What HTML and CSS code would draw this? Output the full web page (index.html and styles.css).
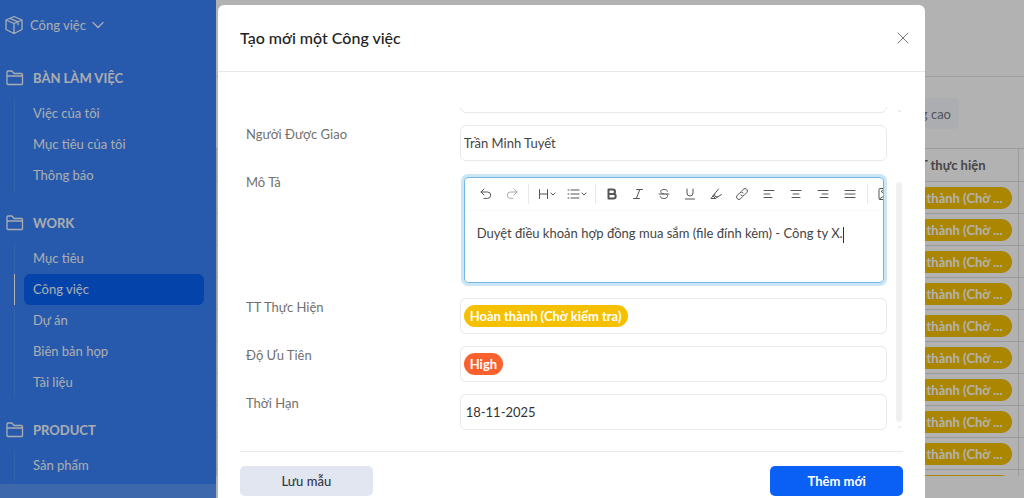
FILE: index.html
```html
<!DOCTYPE html>
<html lang="vi">
<head>
    <meta charset="UTF-8">
    <meta name="viewport" content="width=device-width, initial-scale=1.0">
    <title>Công việc</title>
    <link rel="stylesheet" href="styles.css">
</head>
<body>
    <div class="app">
        <aside class="sidebar">
            <button type="button" class="workspace">
                <svg width="20" height="20" viewBox="0 0 20 20"><path d="M10 1.5 18 5v9.5L10 18.5 2 14.500V5zM2 5l8 3.500L18 5M10 8.500v10M6 3.300l8 3.500v3"/></svg>
                Công việc
                <svg width="12" height="12" viewBox="0 0 12 12"><path d="M1 3.500l5 5 5-5"/></svg>
            </button>
            <nav class="menu">
                <section>
                    <h2><svg width="18" height="16" viewBox="0 0 18 16"><path d="M1 14V2q0-1 1-1h4l2 2.500h7.500q1 0 1 1V14q0 .5-1 .5H2Q1 14.500 1 14zM1 6h15.500"/></svg>BÀN LÀM VIỆC</h2>
                    <ul>
                        <li><a href="#">Việc của tôi</a></li>
                        <li><a href="#">Mục tiêu của tôi</a></li>
                        <li><a href="#">Thông báo</a></li>
                    </ul>
                </section>
                <section>
                    <h2><svg width="18" height="16" viewBox="0 0 18 16"><path d="M1 14V2q0-1 1-1h4l2 2.500h7.500q1 0 1 1V14q0 .5-1 .5H2Q1 14.500 1 14zM1 6h15.500"/></svg>WORK</h2>
                    <ul>
                        <li><a href="#">Mục tiêu</a></li>
                        <li class="active"><a href="#">Công việc</a></li>
                        <li><a href="#">Dự án</a></li>
                        <li><a href="#">Biên bản họp</a></li>
                        <li><a href="#">Tài liệu</a></li>
                    </ul>
                </section>
                <section>
                    <h2><svg width="18" height="16" viewBox="0 0 18 16"><path d="M1 14V2q0-1 1-1h4l2 2.500h7.500q1 0 1 1V14q0 .5-1 .5H2Q1 14.500 1 14zM1 6h15.500"/></svg>PRODUCT</h2>
                    <ul>
                        <li><a href="#">Sản phẩm</a></li>
                    </ul>
                </section>
            </nav>
            <div class="sidebar-footer"></div>
        </aside>

        <main class="main">
            <div class="topbar"></div>
            <div class="filters">
                <button type="button" class="chip">Nâng cao</button>
            </div>
            <div class="table-wrap">
                <table>
                    <thead>
                        <tr><th></th><th class="status">TT thực hiện</th><th class="more"></th></tr>
                    </thead>
                    <tbody>
                        <tr><td></td><td class="status"><span class="tag">Hoàn thành (Chờ ...</span></td><td></td></tr>
                        <tr><td></td><td class="status"><span class="tag">Hoàn thành (Chờ ...</span></td><td></td></tr>
                        <tr><td></td><td class="status"><span class="tag">Hoàn thành (Chờ ...</span></td><td></td></tr>
                        <tr><td></td><td class="status"><span class="tag">Hoàn thành (Chờ ...</span></td><td></td></tr>
                        <tr><td></td><td class="status"><span class="tag">Hoàn thành (Chờ ...</span></td><td></td></tr>
                        <tr><td></td><td class="status"><span class="tag">Hoàn thành (Chờ ...</span></td><td></td></tr>
                        <tr><td></td><td class="status"><span class="tag">Hoàn thành (Chờ ...</span></td><td></td></tr>
                        <tr><td></td><td class="status"><span class="tag">Hoàn thành (Chờ ...</span></td><td></td></tr>
                        <tr><td></td><td class="status"><span class="tag">Hoàn thành (Chờ ...</span></td><td></td></tr>
                        <tr><td></td><td class="status"><span class="tag"></span></td><td></td></tr>
                    </tbody>
                </table>
            </div>
        </main>
    </div>

    <div class="overlay">
        <div class="modal" role="dialog" aria-labelledby="modalTitle">
            <div class="modal-header">
                <h1 id="modalTitle">Tạo mới một Công việc</h1>
                <button type="button" class="close" aria-label="Đóng">
                    <svg width="12" height="12" viewBox="0 0 12 12"><path d="M1 1l10 10M11 1L1 11"/></svg>
                </button>
            </div>

            <div class="modal-body">
                <form class="form" id="taskForm">
                    <div class="row">
                        <span></span>
                        <input type="text" class="field" aria-label="Tên">
                    </div>
                    <div class="row">
                        <label for="assignee">Người Được Giao</label>
                        <input type="text" class="field" id="assignee" value="Trần Minh Tuyết">
                    </div>
                    <div class="row">
                        <label id="descLabel">Mô Tả</label>
                        <div class="editor">
                            <div class="toolbar">
                                <button type="button" aria-label="Undo"><svg width="14" height="14" viewBox="0 0 14 14"><path d="M5 2L2 5l3 3M2 5h6.500a3.200 3.200 0 0 1 0 6.400H5"/></svg></button>
                                <button type="button" aria-label="Redo" class="off"><svg width="14" height="14" viewBox="0 0 14 14"><path d="M9 2l3 3-3 3M12 5H5.500a3.200 3.200 0 0 0 0 6.400H8"/></svg></button>
                                <i class="sep"></i>
                                <button type="button" aria-label="Heading" class="drop"><svg width="20" height="14" viewBox="0 0 20 14"><path d="M2.500 2.500v9M10.500 2.500v9M2.500 7h8M14 6l2 2 2-2"/></svg></button>
                                <button type="button" aria-label="List" class="drop"><svg width="20" height="14" viewBox="0 0 20 14"><path d="M4 3h8M4 7h8M4 11h8M1 3h1M1 7h1M1 11h1M15 6l2 2 2-2"/></svg></button>
                                <i class="sep"></i>
                                <button type="button" aria-label="Bold"><svg class="bold" width="14" height="14" viewBox="0 0 14 14"><path d="M3.500 2.500h4.300a2.200 2.200 0 0 1 0 4.400H3.500zM3.500 6.900h4.900a2.300 2.300 0 0 1 0 4.600H3.500z"/></svg></button>
                                <button type="button" aria-label="Italic"><svg width="14" height="14" viewBox="0 0 14 14"><path d="M5.500 2.500h6M2.500 11.500h6M8.800 2.500l-3.500 9"/></svg></button>
                                <button type="button" aria-label="Strikethrough"><svg width="14" height="14" viewBox="0 0 14 14"><path d="M10.500 4.200C10.500 1.800 3.700 1.600 3.700 4.600c0 1.400 1.300 2 3.300 2.400M2 7h10M3.200 9.500c0 2.800 7.300 2.800 7.300-.2 0-1-.5-1.800-1.300-2.300"/></svg></button>
                                <button type="button" aria-label="Underline"><svg width="14" height="14" viewBox="0 0 14 14"><path d="M4 2v4a3 3 0 0 0 6 0V2M2.500 12h9"/></svg></button>
                                <button type="button" aria-label="Highlight"><svg width="14" height="14" viewBox="0 0 14 14"><path d="M9.500 2L5.500 7l.5 2.500 2.500.5L12.500 7.500M5.500 7L2 11.500h4.500l2-1.500M4 9l2.500 2.500"/></svg></button>
                                <button type="button" aria-label="Link" class="wide"><svg width="14" height="14" viewBox="0 0 14 14"><path d="M6.500 4.200l1.800-1.900a2.300 2.300 0 0 1 3.400 3.400L9.300 8.100a2.300 2.300 0 0 1-3.400 0M7.500 9.800l-1.800 1.900a2.300 2.300 0 0 1-3.400-3.400l2.400-2.400a2.300 2.300 0 0 1 3.400 0"/></svg></button>
                                <button type="button" aria-label="Align left" class="wide"><svg width="14" height="14" viewBox="0 0 14 14"><path d="M2 3.500h10M2 7h6M2 10.500h8"/></svg></button>
                                <button type="button" aria-label="Align center" class="wide"><svg width="14" height="14" viewBox="0 0 14 14"><path d="M2 3.500h10M4 7h6M3 10.500h8"/></svg></button>
                                <button type="button" aria-label="Align right" class="wide"><svg width="14" height="14" viewBox="0 0 14 14"><path d="M2 3.500h10M6 7h6M4 10.500h8"/></svg></button>
                                <button type="button" aria-label="Justify" class="wide"><svg width="14" height="14" viewBox="0 0 14 14"><path d="M2 3.500h10M2 7h10M2 10.500h10"/></svg></button>
                                <i class="sep"></i>
                                <button type="button" aria-label="Image"><svg width="14" height="14" viewBox="0 0 14 14"><path d="M7 12.500H3q-1 0-1-1v-9q0-1 1-1h8q1 0 1 1V6M2.500 12L12 5.500M4.500 4.500a1.200 1.200 0 1 0 2.400 0 1.200 1.200 0 1 0-2.400 0"/></svg></button>
                            </div>
                            <div class="editor-text" contenteditable="true" role="textbox" aria-labelledby="descLabel" spellcheck="false">Duyệt điều khoản hợp đồng mua sắm (file đính kèm) - Công ty X.<span class="caret"></span></div>
                        </div>
                    </div>
                    <div class="row">
                        <label for="status">TT Thực Hiện</label>
                        <button type="button" class="field" id="status"><span class="tag">Hoàn thành (Chờ kiểm tra)</span></button>
                    </div>
                    <div class="row">
                        <label for="priority">Độ Ưu Tiên</label>
                        <button type="button" class="field" id="priority"><span class="tag high">High</span></button>
                    </div>
                    <div class="row">
                        <label for="deadline">Thời Hạn</label>
                        <input type="text" class="field date" id="deadline" value="18-11-2025">
                    </div>
                </form>
                <div class="scrollbar">
                    <i class="arrow"></i>
                    <i class="thumb"></i>
                    <i class="arrow"></i>
                </div>
            </div>

            <div class="modal-footer">
                <button type="button" class="btn">Lưu mẫu</button>
                <button type="submit" form="taskForm" class="btn primary">Thêm mới</button>
            </div>
        </div>
    </div>
</body>
</html>
```
FILE: styles.css
```css
* {
    box-sizing: border-box;
}
body {
    margin: 0;
    font-family: Lato, "Open Sans", sans-serif;
    font-size: 13px;
    line-height: 18px;
    color: #444;
    background: white;
}
button, input {
    font: inherit;
    color: inherit;
    border: none;
    background: none;
    padding: 0;
}
button {
    cursor: pointer;
}
svg {
    fill: none;
    stroke: currentColor;
    stroke-linecap: round;
    stroke-linejoin: round;
    flex-shrink: 0;
}
.app {
    display: flex;
    height: 100vh;
    overflow: hidden;
}

/* sidebar */
.sidebar {
    display: flex;
    flex-direction: column;
    width: 216px;
    flex-shrink: 0;
    background: #3982f7;
    color: #f4f7fd;
}
.sidebar svg {
    stroke-width: 1.3;
}
.workspace {
    display: flex;
    align-items: center;
    gap: 6px;
    height: 49px;
    padding-left: 4px;
    flex-shrink: 0;
}
.menu {
    flex: 1;
    min-height: 0;
    overflow: hidden;
    padding-top: 13px;
}
.menu h2 {
    display: flex;
    align-items: center;
    gap: 9px;
    height: 31px;
    margin: 0 0 5px;
    padding-left: 6px;
    font-size: 13px;
    font-weight: 700;
}
.menu ul {
    list-style: none;
    margin: 0 12px 16px 14px;
    padding: 0;
}
.menu li {
    border-left: 1px solid #4a8df8;
    padding-left: 9px;
}
.menu a {
    display: block;
    padding-left: 9px;
    border-radius: 6px;
    line-height: 31px;
    color: inherit;
    text-decoration: none;
}
.menu .active {
    border-color: white;
}
.menu .active a {
    background: #0661f4;
}
.sidebar-footer {
    height: 14px;
    background: #5996f6;
}

/* task list */
.main {
    display: flex;
    flex-direction: column;
    flex: 1;
    min-width: 0;
    padding-bottom: 22px;
}
.topbar {
    height: 77px;
    flex-shrink: 0;
    border-bottom: 1px solid #e2e2e2;
}
.filters {
    display: flex;
    justify-content: flex-end;
    padding: 21px 65px 19px 0;
}
.chip {
    height: 31px;
    padding: 0 8px;
    border-radius: 5px;
    background: #f6f8fc;
    color: #77797f;
}
.table-wrap {
    flex: 1;
    min-height: 0;
    overflow: hidden;
}
table {
    width: 100%;
    border-collapse: collapse;
    table-layout: fixed;
}
th, td {
    height: 32px;
    padding: 0;
    border: 1px solid #dedede;
    border-right-width: 0;
}
th {
    height: 33px;
    font-weight: 700;
    color: #666;
}
.status {
    width: 180px;
    padding-right: 6px;
    text-align: right;
}
th.status {
    padding-right: 32px;
}
.more {
    width: 6px;
}
.tag {
    display: inline-block;
    height: 22px;
    line-height: 22px;
    padding: 0 6px;
    border-radius: 11px;
    background: #f5c000;
    color: white;
    font-weight: 700;
    vertical-align: middle;
}
td .tag {
    min-width: 130px;
    padding: 0 9px;
}
.tag.high {
    background: #f9622f;
}

/* modal */
.overlay {
    position: fixed;
    inset: 0;
    display: flex;
    padding: 5px 99px 0 218px;
    background: rgba(0, 0, 0, 0.3);
}
.modal {
    display: flex;
    flex-direction: column;
    flex: 1;
    min-width: 0;
    background: white;
    border-radius: 6px 6px 0 0;
}
.modal-header {
    display: flex;
    align-items: center;
    justify-content: space-between;
    height: 67px;
    padding: 0 16px 0 22px;
    border-bottom: 1px solid #e8e8e8;
}
.modal-header h1 {
    margin: 0;
    font-size: 16px;
    font-weight: 500;
    color: #222;
}
.close {
    display: flex;
    color: #777;
}
.modal-body {
    display: flex;
    gap: 9px;
    flex: 1;
    min-height: 0;
    padding: 35px 23px 21px 28px;
}
.form {
    display: flex;
    flex-direction: column;
    justify-content: flex-end;
    gap: 12px;
    flex: 1;
    min-width: 0;
    overflow: hidden;
}
.row {
    display: grid;
    grid-template-columns: 1fr 2fr;
    flex-shrink: 0;
    align-items: start;
}
.row label {
    color: #707070;
}
.field {
    display: flex;
    align-items: center;
    width: 100%;
    height: 36px;
    padding: 0 3px;
    border: 1px solid #e9e9e9;
    border-radius: 6px;
    background: white;
}
.field.date {
    padding-left: 5px;
    color: #333;
}
.editor {
    min-width: 0;
    height: 106px;
    margin: 4px 3px 3px 4px;
    border: 1px solid #74b6df;
    border-radius: 4px;
    box-shadow: 0 0 0 3px #cde6f5;
    overflow: hidden;
}
.toolbar {
    display: flex;
    align-items: center;
    height: 33px;
    padding-left: 8px;
    border-bottom: 1px solid #fafafa;
}
.toolbar button {
    display: flex;
    justify-content: center;
    width: 26px;
    flex-shrink: 0;
    color: #555;
}
.toolbar .wide {
    width: 27px;
}
.toolbar .drop {
    width: 30px;
}
.toolbar .off {
    color: #aaa;
}
.toolbar .bold {
    stroke-width: 2;
}
.sep {
    width: 1px;
    height: 20px;
    margin: 0 3px;
    flex-shrink: 0;
    background: #e8e8e8;
}
.editor-text {
    padding: 13px 12px;
    outline: none;
    white-space: nowrap;
}
.caret {
    display: inline-block;
    width: 1px;
    height: 16px;
    background: #333;
    vertical-align: middle;
}
.scrollbar {
    display: flex;
    flex-direction: column;
    align-items: center;
    justify-content: space-between;
    width: 6px;
    padding: 3px 0 2px;
}
.arrow {
    width: 3px;
    height: 2px;
    border-radius: 1px;
    background: #eaecec;
}
.thumb {
    width: 6px;
    flex: 1;
    margin: 70px 0 4px;
    border-radius: 3px;
    background: #eff1f1;
}
.modal-footer {
    display: flex;
    justify-content: space-between;
    margin: 0 22px;
    padding: 14px 0 2px;
    border-top: 1px solid #e8e8e8;
}
.btn {
    width: 20%;
    height: 30px;
    border-radius: 5px;
    background: #e2e6f0;
    color: #333845;
    font-weight: 500;
}
.btn.primary {
    background: #0a5ff5;
    color: white;
    font-weight: 700;
}
```
